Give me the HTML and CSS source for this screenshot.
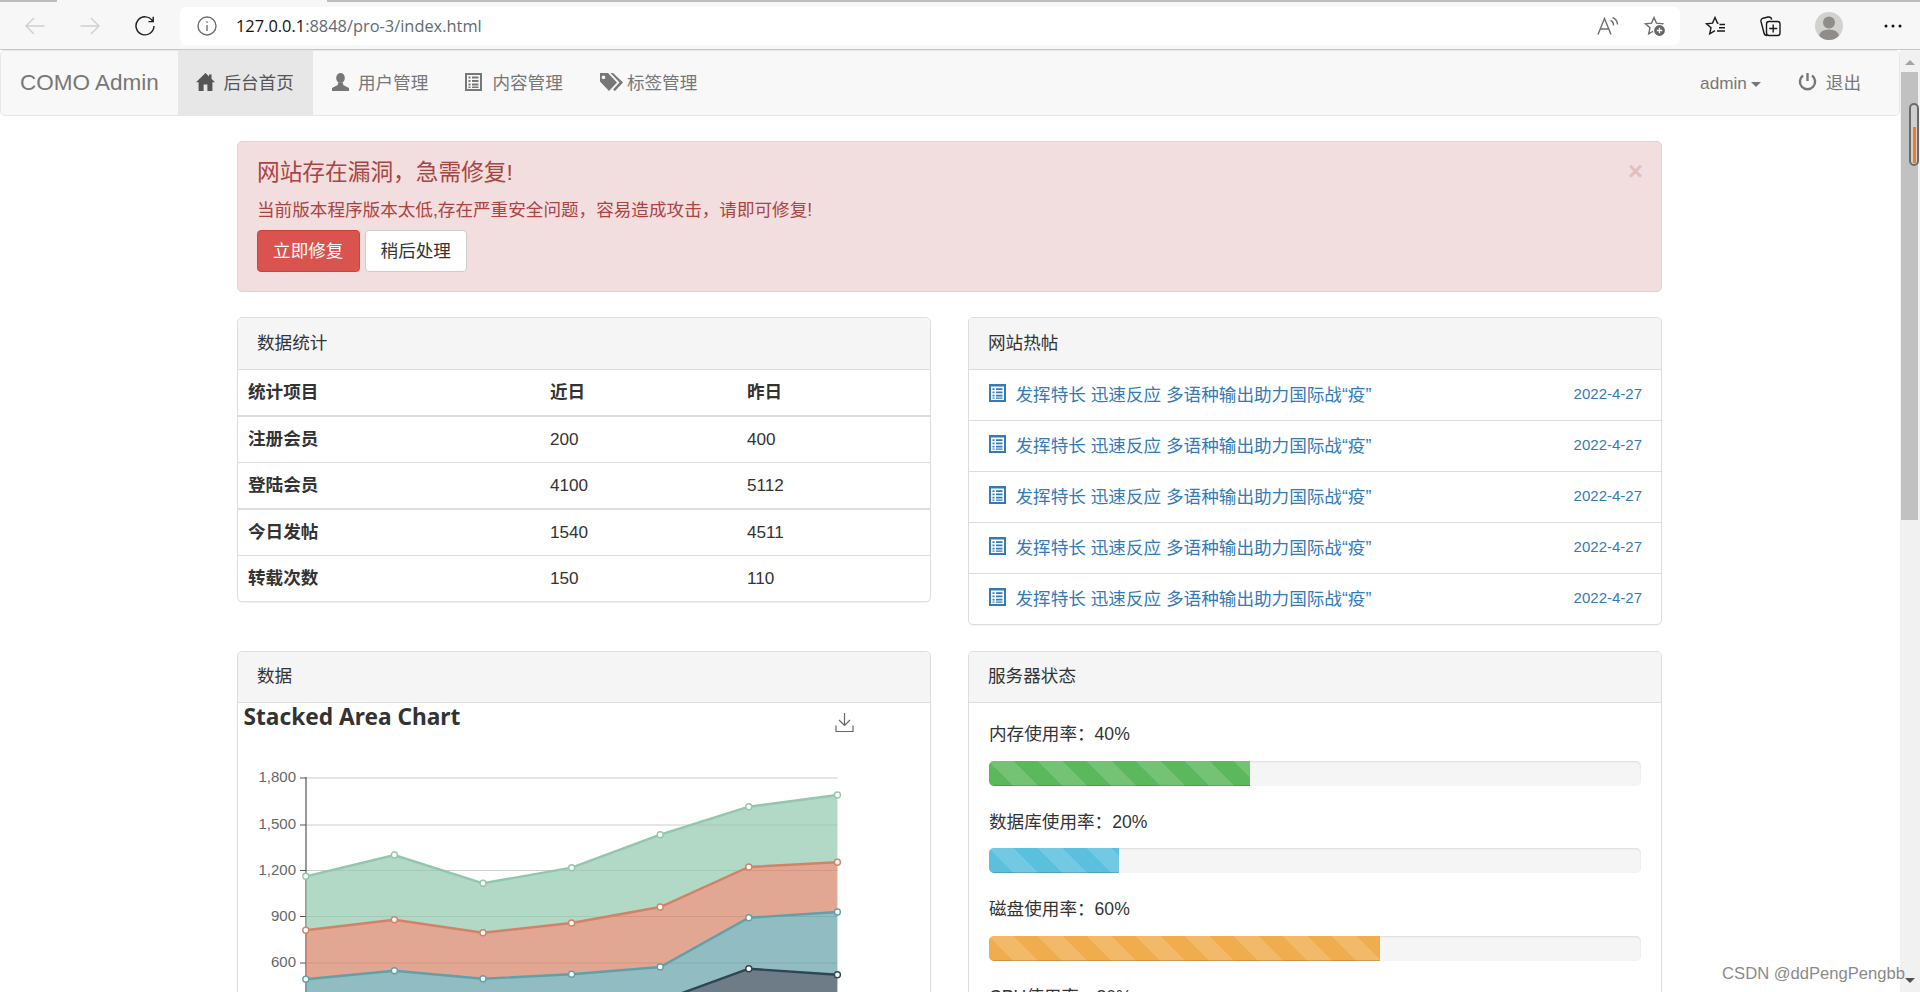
FILE: index.html
```html
<!DOCTYPE html>
<html lang="zh-CN">
<head>
<meta charset="utf-8">
<title>COMO Admin</title>
<link rel="stylesheet" href="styles.css">
</head>
<body>
<div class="tabstrip"><span class="tab-a"></span><span class="tab-b"></span><span class="tab-c"></span></div>
<header class="toolbar">
  <div class="tool-left">
    <svg class="tb-icon" width="20" height="20" viewBox="0 0 20 20"><path class="st-off" d="M19.5 10H1M9 2l-8 8 8 8"/></svg>
    <svg class="tb-icon" width="20" height="20" viewBox="0 0 20 20"><path class="st-off" d="M.5 10H19M11 2l8 8-8 8"/></svg>
    <svg class="tb-icon" width="20" height="20" viewBox="0 0 20 20"><path class="st-on" d="M17.6 5A9 9 0 1 0 19 10M18.2 .8V5.6H13.4"/></svg>
  </div>
  <div class="addr">
    <svg class="info" width="20" height="20" viewBox="0 0 20 20"><circle class="st-grey" cx="10" cy="10" r="9"/><path class="st-grey" d="M10 9v6M10 5.2v1.6"/></svg>
    <span class="url"><b>127.0.0.1</b>:8848/pro-3/index.html</span>
    <svg class="aloud" width="22" height="18" viewBox="0 0 22 18"><path class="st-grey" d="M1 17.500 7.500 1.500 14 17.500M3.200 12H11.800M13.500 3.500Q16.500 4.500 16.500 8.500M15.500 .8Q20 2 20.500 7.500"/></svg>
    <svg class="favadd" width="22" height="21" viewBox="0 0 22 21"><path class="st-grey" d="M10 1.500 12.470 7.100 18.560 7.720 14 11.740 15.290 17.780 10 14.700 4.710 17.780 6 11.740 1.440 7.720 7.530 7.100Z"/><circle cx="15.500" cy="14.500" r="6" fill="#666" stroke="#fff" stroke-width="1.200"/><path d="M15.500 11.800v5.400M12.800 14.500h5.400" stroke="#fff" stroke-width="1.300"/></svg>
  </div>
  <div class="tool-right">
    <svg class="i-favs" width="21" height="20" viewBox="0 0 21 20"><path class="st-on" d="M13.500 7.200 12.470 7.100 10 1.500 7.530 7.100 1.440 7.720 6 11.740 4.710 17.780 10 14.700"/><path class="st-on" d="M14.500 8.500H20M14 11.800H20M12 15H20"/></svg>
    <svg class="i-coll" width="21" height="21" viewBox="0 0 21 21"><path class="st-on" d="M7 19.500Q4.500 19.500 4 17L1 5.500Q.5 3 3 2.200L8 1Q11 .5 11.800 3.500"/><rect class="st-on" x="6.500" y="5.500" width="13.500" height="14" rx="2.500"/><path class="st-on" d="M13.200 8.500v8M9.200 12.500h8"/></svg>
    <svg class="i-prof" width="28" height="28" viewBox="0 0 28 28"><circle cx="14" cy="14" r="14" fill="#d3d1ce"/><circle cx="14" cy="10.500" r="6" fill="#8f8c89"/><path d="M4 23.500Q5.500 17.500 14 17.500T24 23.500Q20 28 14 28T4 23.500Z" fill="#8f8c89"/></svg>
    <svg class="i-more" width="18" height="4" viewBox="0 0 18 4"><circle cx="2" cy="2" r="1.500"/><circle cx="9" cy="2" r="1.500"/><circle cx="16" cy="2" r="1.500"/></svg>
  </div>
</header>

<div class="viewport">
  <div class="page">
    <nav class="navbar">
      <a class="brand">COMO Admin</a>
      <ul class="nav">
        <li class="nav-item active"><span class="glyph"><svg width="19" height="18" viewBox="0 0 19 18"><path d="M9.500 0 13 3.400V1.500h2.500v4.300L19 9.300h-2.600V18h-5v-6.500H7.600V18h-5V9.300H0z"/></svg></span>后台首页</li>
        <li class="nav-item"><span class="glyph"><svg width="19" height="18" viewBox="0 0 19 18"><ellipse cx="9.500" cy="5" rx="4.300" ry="5"/><path d="M7 9.500 6.800 12 1 15v3h17v-3l-5.800-3L12 9.500z"/></svg></span>用户管理</li>
        <li class="nav-item"><span class="glyph"><svg width="17" height="18" viewBox="0 0 17 18"><path fill-rule="evenodd" d="M0 0h17v18H0zM2 2v14h13V2zM3.500 3.500h2v2h-2zM7 3.500h6.500v2H7zM3.500 7h2v2h-2zM7 7h6.500v2H7zM3.500 10.500h2v2h-2zM7 10.500h6.500v2H7zM3.500 13.500h2v1.500h-2zM7 13.500h6.500v1.500H7z"/></svg></span>内容管理</li>
        <li class="nav-item"><span class="glyph"><svg width="23" height="18" viewBox="0 0 23 18"><path fill-rule="evenodd" d="M0 0h8l9 9.500L9 18 0 8.500zM3.500 2.500a1.800 1.800 0 1 0 .01 0z"/><path d="M10.500 0h2.500l10 9.500-8 8.500-2-1.500 6.500-7z"/></svg></span>标签管理</li>
      </ul>
      <div class="nav-right">
        <span class="nav-user">admin<i class="caret"></i></span>
        <span class="nav-exit"><svg width="19" height="19" viewBox="0 0 19 19"><path class="st-nav" d="M5 3.500A7.600 7.600 0 1 0 14 3.500"/><path class="st-nav" d="M9.500 1v8"/></svg>退出</span>
      </div>
    </nav>

    <main class="container">
      <section class="alert">
        <span class="close">×</span>
        <h4 class="alert-title">网站存在漏洞，急需修复!</h4>
        <p class="alert-text">当前版本程序版本太低,存在严重安全问题，容易造成攻击，请即可修复!</p>
        <div class="alert-actions">
          <a class="btn btn-danger">立即修复</a>
          <a class="btn btn-default">稍后处理</a>
        </div>
      </section>

      <div class="grid">
        <section class="panel">
          <div class="panel-heading">数据统计</div>
          <table class="stats">
            <tr class="r-thick"><th class="c1">统计项目</th><th class="c2">近日</th><th>昨日</th></tr>
            <tr class="r-thin"><th>注册会员</th><td>200</td><td>400</td></tr>
            <tr class="r-thick"><th>登陆会员</th><td>4100</td><td>5112</td></tr>
            <tr class="r-thin"><th>今日发帖</th><td>1540</td><td>4511</td></tr>
            <tr class="r-last"><th>转载次数</th><td>150</td><td>110</td></tr>
          </table>
        </section>

        <section class="panel">
          <div class="panel-heading">网站热帖</div>
          <ul class="posts">
            <li class="post"><svg class="post-icon" width="17" height="18" viewBox="0 0 17 18"><use href="#listalt"/></svg><a class="post-link">发挥特长 迅速反应 多语种输出助力国际战“疫”</a><span class="post-date">2022-4-27</span></li>
            <li class="post"><svg class="post-icon" width="17" height="18" viewBox="0 0 17 18"><use href="#listalt"/></svg><a class="post-link">发挥特长 迅速反应 多语种输出助力国际战“疫”</a><span class="post-date">2022-4-27</span></li>
            <li class="post"><svg class="post-icon" width="17" height="18" viewBox="0 0 17 18"><use href="#listalt"/></svg><a class="post-link">发挥特长 迅速反应 多语种输出助力国际战“疫”</a><span class="post-date">2022-4-27</span></li>
            <li class="post"><svg class="post-icon" width="17" height="18" viewBox="0 0 17 18"><use href="#listalt"/></svg><a class="post-link">发挥特长 迅速反应 多语种输出助力国际战“疫”</a><span class="post-date">2022-4-27</span></li>
            <li class="post"><svg class="post-icon" width="17" height="18" viewBox="0 0 17 18"><use href="#listalt"/></svg><a class="post-link">发挥特长 迅速反应 多语种输出助力国际战“疫”</a><span class="post-date">2022-4-27</span></li>
          </ul>
        </section>

        <section class="panel row2">
          <div class="panel-heading">数据</div>
          <svg class="chart" width="692" height="420" viewBox="238 703 692 420">
            <text class="c-title" x="243.500" y="725">Stacked Area Chart</text>
            <path class="c-dl" d="M844.500 713v12M839 720l5.500 5.500 5.500-5.500M836 725.500v6h17v-6"/>
            <g class="c-grid">
              <path d="M306 778H837.400M306 825H837.400M306 870.500H837.400M306 916.500H837.400M306 963H837.400"/>
            </g>
            <path class="c-axis" d="M306 777V1120M300 778h6M300 825h6M300 870.500h6M300 916.500h6M300 963h6"/>
            <g class="c-lab">
              <text x="296" y="782">1,800</text>
              <text x="296" y="828.500">1,500</text>
              <text x="296" y="874.500">1,200</text>
              <text x="296" y="920.500">900</text>
              <text x="296" y="967">600</text>
            </g>
            <polygon fill="#91c7ae" fill-opacity=".7" points="305.800,876.300 394.400,855 483,883.300 571.600,867.700 660.200,834.700 748.800,806.700 837.400,795 837.400,862.300 748.800,867 660.200,907 571.600,923 483,932.700 394.400,919.700 305.800,930.300"/>
            <polygon fill="#d48265" fill-opacity=".7" points="305.800,930.300 394.400,919.700 483,932.700 571.600,923 660.200,907 748.800,867 837.400,862.300 837.400,912 748.800,917.700 660.200,967 571.600,974.300 483,978.700 394.400,970.700 305.800,979.300"/>
            <polygon fill="#61a0a8" fill-opacity=".7" points="305.800,979.300 394.400,970.700 483,978.700 571.600,974.300 660.200,967 748.800,917.700 837.400,912 837.400,974.700 748.800,968.700 660.200,1001 571.600,1006 483,1012 394.400,1004 305.800,1010"/>
            <polygon fill="#2f4554" fill-opacity=".7" points="305.800,1010 394.400,1004 483,1012 571.600,1006 660.200,1001 748.800,968.700 837.400,974.700 837.400,1120 305.800,1120"/>
            <polyline class="ln" stroke="#91c7ae" points="305.800,876.300 394.400,855 483,883.300 571.600,867.700 660.200,834.700 748.800,806.700 837.400,795"/>
            <polyline class="ln" stroke="#d48265" points="305.800,930.300 394.400,919.700 483,932.700 571.600,923 660.200,907 748.800,867 837.400,862.300"/>
            <polyline class="ln" stroke="#61a0a8" points="305.800,979.300 394.400,970.700 483,978.700 571.600,974.300 660.200,967 748.800,917.700 837.400,912"/>
            <polyline class="ln" stroke="#2f4554" points="305.800,1010 394.400,1004 483,1012 571.600,1006 660.200,1001 748.800,968.700 837.400,974.700"/>
            <g class="pt" stroke="#91c7ae"><circle cx="305.800" cy="876.300" r="3"/><circle cx="394.400" cy="855" r="3"/><circle cx="483" cy="883.300" r="3"/><circle cx="571.600" cy="867.700" r="3"/><circle cx="660.200" cy="834.700" r="3"/><circle cx="748.800" cy="806.700" r="3"/><circle cx="837.400" cy="795" r="3"/></g>
            <g class="pt" stroke="#d48265"><circle cx="305.800" cy="930.300" r="3"/><circle cx="394.400" cy="919.700" r="3"/><circle cx="483" cy="932.700" r="3"/><circle cx="571.600" cy="923" r="3"/><circle cx="660.200" cy="907" r="3"/><circle cx="748.800" cy="867" r="3"/><circle cx="837.400" cy="862.300" r="3"/></g>
            <g class="pt" stroke="#61a0a8"><circle cx="305.800" cy="979.300" r="3"/><circle cx="394.400" cy="970.700" r="3"/><circle cx="483" cy="978.700" r="3"/><circle cx="571.600" cy="974.300" r="3"/><circle cx="660.200" cy="967" r="3"/><circle cx="748.800" cy="917.700" r="3"/><circle cx="837.400" cy="912" r="3"/></g>
            <g class="pt" stroke="#2f4554"><circle cx="748.800" cy="968.700" r="3"/><circle cx="837.400" cy="974.700" r="3"/></g>
          </svg>
        </section>

        <section class="panel row2">
          <div class="panel-heading">服务器状态</div>
          <div class="status">
            <p class="st-label">内存使用率：40%</p>
            <div class="progress"><div class="bar bar-green w40"></div></div>
            <p class="st-label">数据库使用率：20%</p>
            <div class="progress"><div class="bar bar-blue w20"></div></div>
            <p class="st-label">磁盘使用率：60%</p>
            <div class="progress"><div class="bar bar-orange w60"></div></div>
            <p class="st-label">CPU使用率：80%</p>
            <div class="progress"><div class="bar bar-red w80"></div></div>
          </div>
        </section>
      </div>
    </main>
  </div>

  <aside class="scrollbar">
    <span class="sb-up"></span>
    <span class="sb-thumb"></span>
    <span class="sb-track"></span>
    <span class="sb-down"></span>
    <span class="sb-mark"><i class="sb-orange"></i></span>
  </aside>
  <span class="watermark">CSDN @ddPengPengbb</span>
</div>

<svg class="defs" width="0" height="0"><defs><path id="listalt" fill="#337ab7" fill-rule="evenodd" d="M0 0h17v18H0zM2 2.500v13.500h13V2.500zM3.500 4.200h2v1.800h-2zM7 4.200h6.500v1.800H7zM3.500 7.500h2v1.800h-2zM7 7.500h6.500v1.800H7zM3.500 10.700h2v1.800h-2zM7 10.700h6.500v1.800H7zM3.500 13.500h2v1.300h-2zM7 13.500h6.500v1.300H7z"/></defs></svg>
</body>
</html>
```

FILE: styles.css
```css
* { box-sizing: border-box; }
html, body { margin: 0; height: 100%; overflow: hidden; }
body {
  display: flex;
  flex-direction: column;
  height: 992px;
  background: #fff;
  color: #333;
  font-family: "Liberation Sans", "Noto Sans CJK SC", sans-serif;
  font-size: 17.600px;
  line-height: 24.500px;
}
.defs { position: absolute; }

/* browser chrome */
.tabstrip { display: flex; height: 2px; flex: none; background: #f7f7f7; }
.tab-a { width: 57px; background: #bdbdbd; }
.tab-b { width: 270px; background: #f7f7f7; }
.tab-c { flex: 1; background: #bdbdbd; }
.toolbar {
  flex: none;
  height: 48px;
  display: flex;
  align-items: center;
  background: #f7f7f7;
  border-bottom: 1px solid #c6c6c6;
  padding-top: 1px;
}
.tool-left { width: 180px; display: flex; align-items: center; padding-left: 25px; gap: 35px; }
.tb-icon { flex: none; }
.st-off, .st-on, .st-grey, .st-nav { fill: none; stroke-width: 1.400; }
.st-off { stroke: #cfcfcf; }
.st-on { stroke: #1a1a1a; }
.st-grey { stroke: #6e6e6e; }
.st-nav { stroke: #777; stroke-width: 2.400; }
.addr {
  width: 1500px;
  height: 38px;
  background: #fff;
  border-radius: 6px;
  display: flex;
  align-items: center;
  padding: 0 14px 0 17px;
}
.url {
  margin-left: 19px;
  flex: 1;
  font-family: "Open Sans", sans-serif;
  font-size: 16.400px;
  color: #5e6a75;
  white-space: nowrap;
}
.url b { font-weight: 400; color: #111; }
.favadd { margin-left: 25px; }
.tool-right { position: relative; flex: 1; display: flex; align-items: center; }
.i-favs { margin-left: 25px; }
.i-coll { margin-left: 34px; }
.i-prof { margin-left: 34px; }
.i-more { margin-left: 41px; fill: #111; }

/* page */
.viewport { flex: 1; min-height: 0; display: flex; position: relative; }
.page { flex: 1; min-width: 0; overflow: hidden; }

.navbar {
  height: 66px;
  display: flex;
  align-items: stretch;
  background: #f8f8f8;
  border: 1px solid #e7e7e7;
  border-radius: 5px;
  color: #777;
}
.brand {
  width: 177px;
  padding-left: 19px;
  font-size: 22.500px;
  line-height: 63px;
  color: #777;
}
.nav { list-style: none; margin: 0; padding: 0; display: flex; }
.nav-item {
  width: 134.500px;
  display: flex;
  align-items: center;
  padding-left: 18.400px;
  white-space: nowrap;
}
.nav-item.active { background: #e7e7e7; color: #555; }
.glyph { width: 27px; flex: none; display: flex; margin-top: -3px; }
.glyph svg { fill: currentColor; }
.nav-right { margin-left: auto; display: flex; align-items: center; padding-right: 38px; }
.nav-user { display: flex; align-items: center; margin-right: 37px; font-size: 17.150px; }
.caret {
  margin-left: 4px;
  margin-top: 2px;
  border-top: 5px solid #777;
  border-left: 5px solid transparent;
  border-right: 5px solid transparent;
}
.nav-exit { display: flex; align-items: center; gap: 9px; }
.nav-exit svg { margin-top: -4px; }

.container { width: 1425px; margin: 25px 0 0 237px; }

.alert {
  position: relative;
  height: 151px;
  padding: 18px 18px 18px 19px;
  background: #f2dede;
  border: 1px solid #ebccd1;
  border-radius: 5px;
  color: #a94442;
}
.close {
  position: absolute;
  right: 18px;
  top: 16px;
  font-size: 25.700px;
  font-weight: 700;
  line-height: 27px;
  color: #a94442;
  opacity: .2;
}
.alert-title { margin: 0 0 13.500px; font-size: 22.700px; font-weight: 400; line-height: 24px; }
.alert-text { margin: 0 0 8px; }
.alert-actions { display: flex; gap: 5px; }
.btn {
  height: 42px;
  width: 102.500px;
  display: flex;
  align-items: center;
  justify-content: center;
  border: 1px solid;
  border-radius: 4px;
}
.btn-danger { background: #d9534f; border-color: #d43f3a; color: #fff; }
.btn-default { background: #fff; border-color: #ccc; color: #333; }

.grid {
  display: grid;
  grid-template-columns: 694px 694px;
  column-gap: 37px;
  row-gap: 26px;
  align-items: start;
  margin-top: 25px;
}
.panel {
  background: #fff;
  border: 1px solid #ddd;
  border-radius: 5px;
  box-shadow: 0 1px 1px rgba(0,0,0,.05);
  overflow: hidden;
}
.panel-heading {
  height: 52px;
  padding: 13px 19px 0;
  background: #f5f5f5;
  border-bottom: 1px solid #ddd;
}
.row2 .panel-heading { height: 51px; padding-top: 12px; }

.stats { width: 100%; border-collapse: separate; border-spacing: 0; table-layout: fixed; }
.stats th, .stats td { padding: 0 10px; text-align: left; }
.stats th { font-weight: 700; }
.stats td { font-size: 17.150px; }
.c1 { width: 302px; }
.c2 { width: 197px; }
.r-thick th, .r-thick td { height: 47px; border-bottom: 2px solid #ddd; }
.r-thin th, .r-thin td { height: 46px; border-bottom: 1px solid #ddd; }
.r-last th, .r-last td { height: 45px; }

.posts { list-style: none; margin: 0; padding: 0; }
.post {
  height: 51px;
  display: flex;
  align-items: center;
  padding: 0 19px 0 20px;
  border-bottom: 1px solid #ddd;
}
.post:last-child { height: 50px; border-bottom: 0; }
.post-icon { flex: none; margin-right: 9.500px; margin-top: -4px; }
.post-link { color: #337ab7; flex: 1; white-space: nowrap; }
.post-date { color: #337ab7; font-size: 15px; margin-top: -2px; }

.chart { display: block; }
.c-title { font-family: "Noto Sans", "Noto Sans CJK SC", sans-serif; font-size: 22.700px; font-weight: 700; fill: #333; }
.c-dl { fill: none; stroke: #666; stroke-width: 1.200; }
.c-grid path { fill: none; stroke: #ccc; stroke-width: 1.200; }
.c-axis { fill: none; stroke: #555; stroke-width: 1.200; }
.c-lab text { font-size: 15px; fill: #666; text-anchor: end; }
.ln { fill: none; stroke-width: 2.400; }
.pt circle { fill: #fff; stroke-width: 1.400; }

.status { padding: 19px 20px 0; }
.st-label { margin: 0 0 14px; }
.progress {
  height: 25px;
  margin-bottom: 24px;
  background: #f5f5f5;
  border-radius: 5px;
  overflow: hidden;
  box-shadow: inset 0 1px 2px rgba(0,0,0,.1);
}
.bar {
  height: 100%;
  background-image: linear-gradient(45deg, rgba(255,255,255,.15) 25%, transparent 25%, transparent 50%, rgba(255,255,255,.15) 50%, rgba(255,255,255,.15) 75%, transparent 75%, transparent);
  background-size: 49px 49px;
  box-shadow: inset 0 -1px 0 rgba(0,0,0,.15);
}
.bar-green { background-color: #5cb85c; }
.bar-blue { background-color: #5bc0de; }
.bar-orange { background-color: #f0ad4e; }
.bar-red { background-color: #d9534f; }
.w20 { width: 20%; }
.w40 { width: 40%; }
.w60 { width: 60%; }
.w80 { width: 80%; }

/* scrollbar */
.scrollbar { width: 20px; flex: none; position: relative; display: flex; flex-direction: column; background: #f1f1f1; }
.sb-up { height: 22px; flex: none; position: relative; }
.sb-up::after {
  content: "";
  position: absolute;
  left: 5px;
  top: 10px;
  border-bottom: 5px solid #a3a3a3;
  border-left: 5px solid transparent;
  border-right: 5px solid transparent;
}
.sb-thumb { height: 448px; flex: none; margin: 0 2px 0 1px; background: #c1c1c1; }
.sb-track { flex: 1; }
.sb-down { height: 21px; flex: none; position: relative; }
.sb-down::after {
  content: "";
  position: absolute;
  left: 5px;
  top: 7px;
  border-top: 5px solid #505050;
  border-left: 5px solid transparent;
  border-right: 5px solid transparent;
}
.sb-mark {
  position: absolute;
  left: 9px;
  top: 53px;
  width: 10px;
  height: 63px;
  border: 2px solid #6b6b6b;
  border-radius: 5px;
  background: #d0d0d0;
}
.sb-orange { position: absolute; left: 2px; top: 22px; width: 3px; height: 36px; background: #f47a20; }
.watermark {
  position: absolute;
  right: 15px;
  bottom: 8px;
  font-size: 16.600px;
  line-height: 20px;
  color: #8a8a8a;
  white-space: nowrap;
}
```
